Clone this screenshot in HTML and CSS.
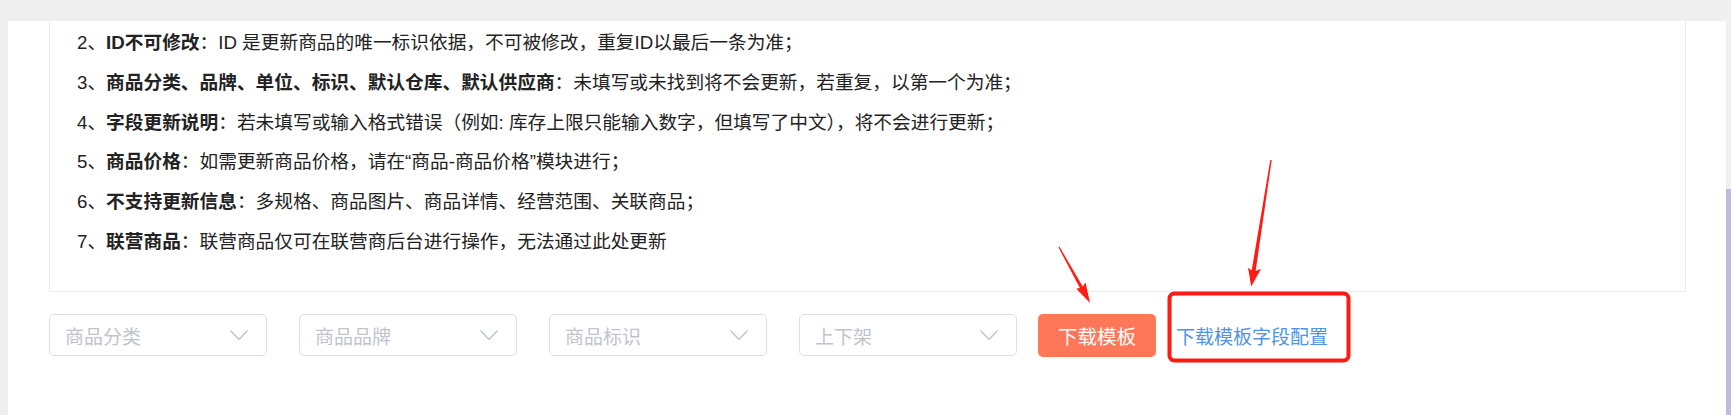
FILE: index.html
```html
<!DOCTYPE html>
<html lang="zh-CN">
<head>
  <meta charset="UTF-8" />
  <meta name="viewport" content="width=device-width, initial-scale=1.0" />
  <title>商品批量更新</title>
  <link rel="stylesheet" href="styles.css">
</head>
<body>
  <div class="page">
    <div class="main">
      <div class="panel">
        <div class="notes">
          <div class="note">2、<b>ID不可修改</b>：ID 是更新商品的唯一标识依据，不可被修改，重复ID以最后一条为准；</div>
          <div class="note">3、<b>商品分类、品牌、单位、标识、默认仓库、默认供应商</b>：未填写或未找到将不会更新，若重复，以第一个为准；</div>
          <div class="note">4、<b>字段更新说明</b>：若未填写或输入格式错误（例如: 库存上限只能输入数字，但填写了中文），将不会进行更新；</div>
          <div class="note">5、<b>商品价格</b>：如需更新商品价格，请在“商品-商品价格”模块进行；</div>
          <div class="note">6、<b>不支持更新信息</b>：多规格、商品图片、商品详情、经营范围、关联商品；</div>
          <div class="note">7、<b>联营商品</b>：联营商品仅可在联营商后台进行操作，无法通过此处更新</div>
        </div>

        <div class="filters">
          <div class="select"><span>商品分类</span><svg class="arrow" viewBox="0 0 18 10"><path d="M0.5 0.5 L9 9.5 L17.5 0.5" /></svg></div>
          <div class="select"><span>商品品牌</span><svg class="arrow" viewBox="0 0 18 10"><path d="M0.5 0.5 L9 9.5 L17.5 0.5" /></svg></div>
          <div class="select"><span>商品标识</span><svg class="arrow" viewBox="0 0 18 10"><path d="M0.5 0.5 L9 9.5 L17.5 0.5" /></svg></div>
          <div class="select"><span>上下架</span><svg class="arrow" viewBox="0 0 18 10"><path d="M0.5 0.5 L9 9.5 L17.5 0.5" /></svg></div>
          <button class="btn">下载模板</button>
          <a class="link">下载模板字段配置</a>
        </div>
      </div>
    </div>
    <div class="scrollbar"><div class="thumb"></div></div>

    <!-- red annotation marks -->
    <svg class="marks" width="1731" height="415" viewBox="0 0 1731 415">
      <rect x="1169.5" y="293.5" width="179" height="67" rx="5" fill="none" stroke="#ff1a12" stroke-width="4" />
      <g transform="translate(1059 247) rotate(-29)" fill="#ff1a12">
        <polygon points="-0.6,0 0.6,0 1.6,46 6,44 0,64 -5,45 -1.6,46" />
      </g>
      <g transform="translate(1271 160) rotate(8.9)" fill="#ff1a12">
        <polygon points="-0.7,0 0.7,0 2,112 7,109 0,128 -6,110 -2,112" />
      </g>
    </svg>
  </div>
</body>
</html>
```

FILE: styles.css
```css
* {
  box-sizing: border-box;
}
body {
  margin: 0;
  background: #efefef;
  font-family: "Liberation Sans", "Noto Sans CJK SC", sans-serif;
  color: #222;
}
.page {
  position: relative;
  display: flex;
  height: 415px;
  overflow: hidden;
}
.main {
  flex: 1;
  padding: 21px 0 0 8px;
}
.panel {
  background: #fff;
  height: 100%;
  padding: 0 40px 0 41px;
}
.notes {
  border: 1px solid #ececec;
  border-top: none;
  padding: 2px 0 29px 27px;
  font-size: 18.7px;
  line-height: 39.8px;
}
.note b {
  font-weight: 700;
}
.filters {
  display: flex;
  align-items: center;
  margin-top: 22px;
}
.select {
  width: 218px;
  height: 42px;
  margin-right: 32px;
  border: 1px solid #dcdfe6;
  border-radius: 5px;
  display: flex;
  align-items: center;
  justify-content: space-between;
  padding: 0 18px 0 15px;
  font-size: 19px;
  color: #c0c4cc;
}
.select .arrow {
  width: 18px;
  height: 10px;
  fill: none;
  stroke: #c0c4cc;
  stroke-width: 1.4;
}
.btn {
  width: 118px;
  height: 43px;
  margin-left: -11px;
  border: none;
  border-radius: 5px;
  background: #ff7759;
  color: #fff;
  font-family: inherit;
  font-size: 19.5px;
  cursor: pointer;
}
.link {
  margin-left: 20px;
  font-size: 19px;
  color: #4f94e6;
  cursor: pointer;
}
.scrollbar {
  width: 5px;
  padding-top: 189px;
}
.thumb {
  height: 100%;
  background: #bcbcdf;
}
.marks {
  position: absolute;
  top: 0;
  left: 0;
  pointer-events: none;
}
```
